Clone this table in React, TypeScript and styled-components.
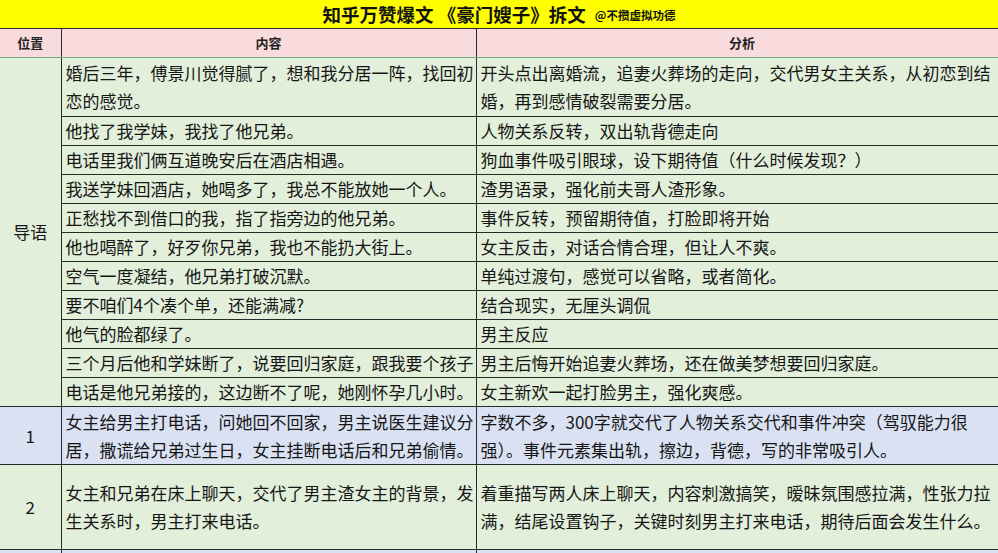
import React from "react";
import styled, { createGlobalStyle } from "styled-components";

const Global = createGlobalStyle`
  html, body { margin: 0; padding: 0; background: #ffffff; }
  body { width: 998px; height: 553px; overflow: hidden; font-family: "Noto Sans CJK SC", "Noto Sans", sans-serif; }
`;

const Sheet = styled.div`
  width: 1008px;
  display: flex;
  flex-direction: column;
`;

const TitleBar = styled.div`
  width: 998px;
  height: 28px;
  background: #ffff00;
  border-bottom: 1px solid #2a2a2a;
  display: flex;
  align-items: center;
  justify-content: center;
  gap: 9px;
  box-sizing: content-box;
`;

const TitleMain = styled.span`
  font-size: 18.5px;
  font-weight: 700;
  color: #111;
  line-height: 28px;
`;

const TitleSub = styled.span`
  font-size: 11.5px;
  font-weight: 700;
  color: #111;
  line-height: 28px;
  padding-top: 1px;
`;

const Table = styled.table`
  width: 1008px;
  table-layout: fixed;
  border-collapse: collapse;
  font-size: 17px;
  color: #161616;
`;

const HeadCell = styled.th`
  height: 28px;
  padding: 0;
  background: #f9dadd;
  font-size: 13px;
  font-weight: 700;
  line-height: 28px;
  text-align: center;
  color: #222;
  border-left: 1px solid #2a2a2a;
  border-right: 1px solid #2a2a2a;
  border-bottom: 1px solid #74a88a;
  &:first-child { border-left: none; }
`;

const Cell = styled.td<{ $bg: string; $h?: number; $center?: boolean }>`
  background: ${(p) => p.$bg};
  height: ${(p) => (p.$h ? `${p.$h}px` : "28px")};
  padding: 0 0 0 4px;
  line-height: 28px;
  vertical-align: middle;
  text-align: ${(p) => (p.$center ? "center" : "left")};
  border: 1px solid #2a2a2a;
  white-space: normal;
  word-break: normal;
  overflow: hidden;
  &:first-child { border-left: none; }
`;

const SideCell = styled(Cell)`
  padding: 0;
`;

const GREEN = "#e2efda";
const BLUE = "#d9e1f2";

const intro: [string, string, number?][] = [
  ["婚后三年，傅景川觉得腻了，想和我分居一阵，找回初恋的感觉。", "开头点出离婚流，追妻火葬场的走向，交代男女主关系，从初恋到结婚，再到感情破裂需要分居。", 58],
  ["他找了我学妹，我找了他兄弟。", "人物关系反转，双出轨背德走向"],
  ["电话里我们俩互道晚安后在酒店相遇。", "狗血事件吸引眼球，设下期待值（什么时候发现？）"],
  ["我送学妹回酒店，她喝多了，我总不能放她一个人。", "渣男语录，强化前夫哥人渣形象。"],
  ["正愁找不到借口的我，指了指旁边的他兄弟。", "事件反转，预留期待值，打脸即将开始"],
  ["他也喝醉了，好歹你兄弟，我也不能扔大街上。", "女主反击，对话合情合理，但让人不爽。"],
  ["空气一度凝结，他兄弟打破沉默。", "单纯过渡句，感觉可以省略，或者简化。"],
  ["要不咱们4个凑个单，还能满减?", "结合现实，无厘头调侃"],
  ["他气的脸都绿了。", "男主反应"],
  ["三个月后他和学妹断了，说要回归家庭，跟我要个孩子", "男主后悔开始追妻火葬场，还在做美梦想要回归家庭。"],
  ["电话是他兄弟接的，这边断不了呢，她刚怀孕几小时。", "女主新欢一起打脸男主，强化爽感。"],
];

export default function App() {
  return (
    <>
      <Global />
      <Sheet>
        <TitleBar>
          <TitleMain>知乎万赞爆文 《豪门嫂子》拆文</TitleMain>
          <TitleSub>@不攒虚拟功德</TitleSub>
        </TitleBar>
        <Table>
          <colgroup>
            <col style={{ width: 61 }} />
            <col style={{ width: 415 }} />
            <col style={{ width: 532 }} />
          </colgroup>
          <thead>
            <tr>
              <HeadCell>位置</HeadCell>
              <HeadCell>内容</HeadCell>
              <HeadCell>分析</HeadCell>
            </tr>
          </thead>
          <tbody>
            {intro.map(([content, analysis, h], i) => (
              <tr key={i}>
                {i === 0 && (
                  <SideCell $bg={GREEN} $center rowSpan={intro.length}>
                    导语
                  </SideCell>
                )}
                <Cell $bg={GREEN} $h={h}>{content}</Cell>
                <Cell $bg={GREEN} $h={h}>{analysis}</Cell>
              </tr>
            ))}
            <tr>
              <SideCell $bg={BLUE} $center $h={57}>1</SideCell>
              <Cell $bg={BLUE} $h={57}>女主给男主打电话，问她回不回家，男主说医生建议分居，撒谎给兄弟过生日，女主挂断电话后和兄弟偷情。</Cell>
              <Cell $bg={BLUE} $h={57}>字数不多，300字就交代了人物关系交代和事件冲突（驾驭能力很强）。事件元素集出轨，擦边，背德，写的非常吸引人。</Cell>
            </tr>
            <tr>
              <SideCell $bg={GREEN} $center $h={84}>2</SideCell>
              <Cell $bg={GREEN} $h={84}>女主和兄弟在床上聊天，交代了男主渣女主的背景，发生关系时，男主打来电话。</Cell>
              <Cell $bg={GREEN} $h={84}>着重描写两人床上聊天，内容刺激搞笑，暧昧氛围感拉满，性张力拉满，结尾设置钩子，关键时刻男主打来电话，期待后面会发生什么。</Cell>
            </tr>
            <tr>
              <SideCell $bg={BLUE} $center $h={40}></SideCell>
              <Cell $bg={BLUE} $h={40}></Cell>
              <Cell $bg={BLUE} $h={40}></Cell>
            </tr>
          </tbody>
        </Table>
      </Sheet>
    </>
  );
}
